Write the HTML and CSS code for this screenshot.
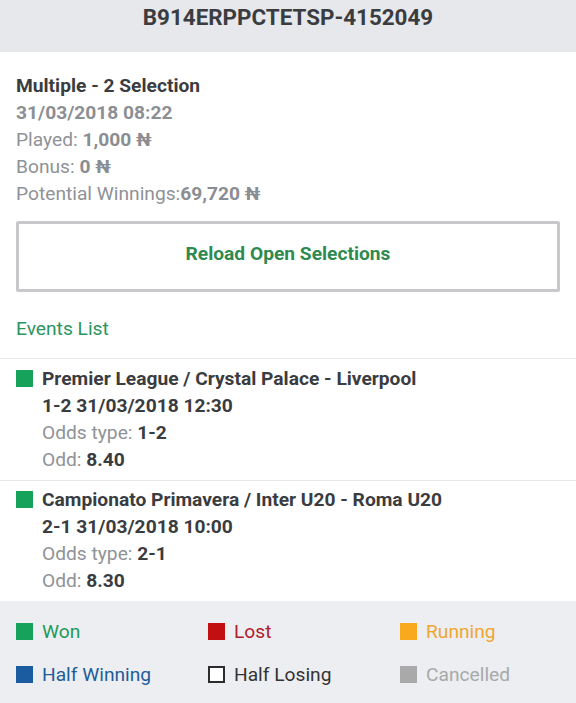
FILE: index.html
```html
<!DOCTYPE html>
<html>
<head>
<meta charset="utf-8">
<link rel="stylesheet" href="styles.css">
</head>
<body>
<header class="top">
  <h1 class="code">B914ERPPCTETSP-4152049</h1>
</header>
<main class="content">
  <section class="summary">
    <div class="line strong">Multiple - 2 Selection</div>
    <div class="line date">31/03/2018 08:22</div>
    <div class="line muted">Played: <b>1,000 ₦</b></div>
    <div class="line muted">Bonus: <b>0 ₦</b></div>
    <div class="line muted">Potential Winnings:<b>69,720 ₦</b></div>
  </section>
  <div class="btn">Reload Open Selections</div>
  <div class="events-title">Events List</div>
</main>
<ul class="events">
  <li class="event">
    <span class="sq won"></span>
    <div class="ev-body">
      <div class="line strong">Premier League / Crystal Palace - Liverpool</div>
      <div class="line strong">1-2 31/03/2018 12:30</div>
      <div class="line muted">Odds type: <b class="dark">1-2</b></div>
      <div class="line muted">Odd: <b class="dark">8.40</b></div>
    </div>
  </li>
  <li class="event">
    <span class="sq won"></span>
    <div class="ev-body">
      <div class="line strong">Campionato Primavera / Inter U20 - Roma U20</div>
      <div class="line strong">2-1 31/03/2018 10:00</div>
      <div class="line muted">Odds type: <b class="dark">2-1</b></div>
      <div class="line muted">Odd: <b class="dark">8.30</b></div>
    </div>
  </li>
</ul>
<footer class="legend">
  <div class="lg"><span class="lsq won"></span><span class="t-won">Won</span></div>
  <div class="lg"><span class="lsq lost"></span><span class="t-lost">Lost</span></div>
  <div class="lg"><span class="lsq running"></span><span class="t-running">Running</span></div>
  <div class="lg"><span class="lsq hwin"></span><span class="t-hwin">Half Winning</span></div>
  <div class="lg"><span class="lsq hlose"></span><span class="t-hlose">Half Losing</span></div>
  <div class="lg"><span class="lsq canc"></span><span class="t-canc">Cancelled</span></div>
</footer>
</body>
</html>
```
FILE: styles.css
```css
* { box-sizing: border-box; }
html, body { margin: 0; padding: 0; background: #fff; }
body {
  width: 576px;
  height: 703px;
  overflow: hidden;
  font-family: Roboto, "Liberation Sans", sans-serif;
  font-size: 19.2px;
  color: #3a3c3f;
}
.top {
  background: #e6e8eb;
  height: 52px;
  padding-top: 5px;
}
.code {
  margin: 0;
  text-align: center;
  font-size: 22.4px;
  line-height: 24px;
  font-weight: 700;
  color: #3a3c3f;
}
.content { padding: 20px 16px 16px 16px; }
.line { line-height: 27px; white-space: nowrap; }
.strong { font-weight: 700; color: #3a3c3f; }
.date { font-weight: 700; color: #8c8f93; }
.muted { color: #8f9296; }
.muted b { font-weight: 700; color: #8a8d91; }
.muted b.dark { color: #3a3c3f; }
.btn {
  margin-top: 14px;
  height: 71px;
  padding-bottom: 6px;
  border: 3px solid #c6c8cb;
  border-radius: 2px;
  display: flex;
  align-items: center;
  justify-content: center;
  font-weight: 700;
  color: #2f8a4f;
}
.events-title {
  margin-top: 23px;
  line-height: 27px;
  color: #2a9560;
}
.events {
  list-style: none;
  margin: 0;
  padding: 0;
  border-top: 1px solid #e7e8ea;
}
.event {
  display: flex;
  gap: 9px;
  padding: 6px 16px 7px 16px;
  border-bottom: 1px solid #e7e8ea;
}
.event:last-child { border-bottom: none; padding-top: 5px; padding-bottom: 7px; }
.sq {
  flex: none;
  width: 17px;
  height: 17px;
  margin-top: 5px;
}
.won { background: #16a25a; }
.legend {
  background: #eceef1;
  height: 102px;
  padding: 17px 16px 0 16px;
  display: grid;
  grid-template-columns: 192px 192px 1fr;
  row-gap: 16px;
  align-content: start;
}
.lg {
  display: flex;
  align-items: center;
  gap: 9px;
  line-height: 27px;
}
.lsq { width: 17px; height: 17px; flex: none; }
.lost { background: #c20f12; }
.running { background: #f9a91e; }
.hwin { background: #1b5b9f; }
.hlose { background: #fff; border: 2px solid #2c2c2c; }
.canc { background: #a9a9a9; }
.t-won { color: #1f9a5a; }
.t-lost { color: #b0202a; }
.t-running { color: #efa631; }
.t-hwin { color: #1f5d98; }
.t-hlose { color: #333; }
.t-canc { color: #a8a9ab; }
```
